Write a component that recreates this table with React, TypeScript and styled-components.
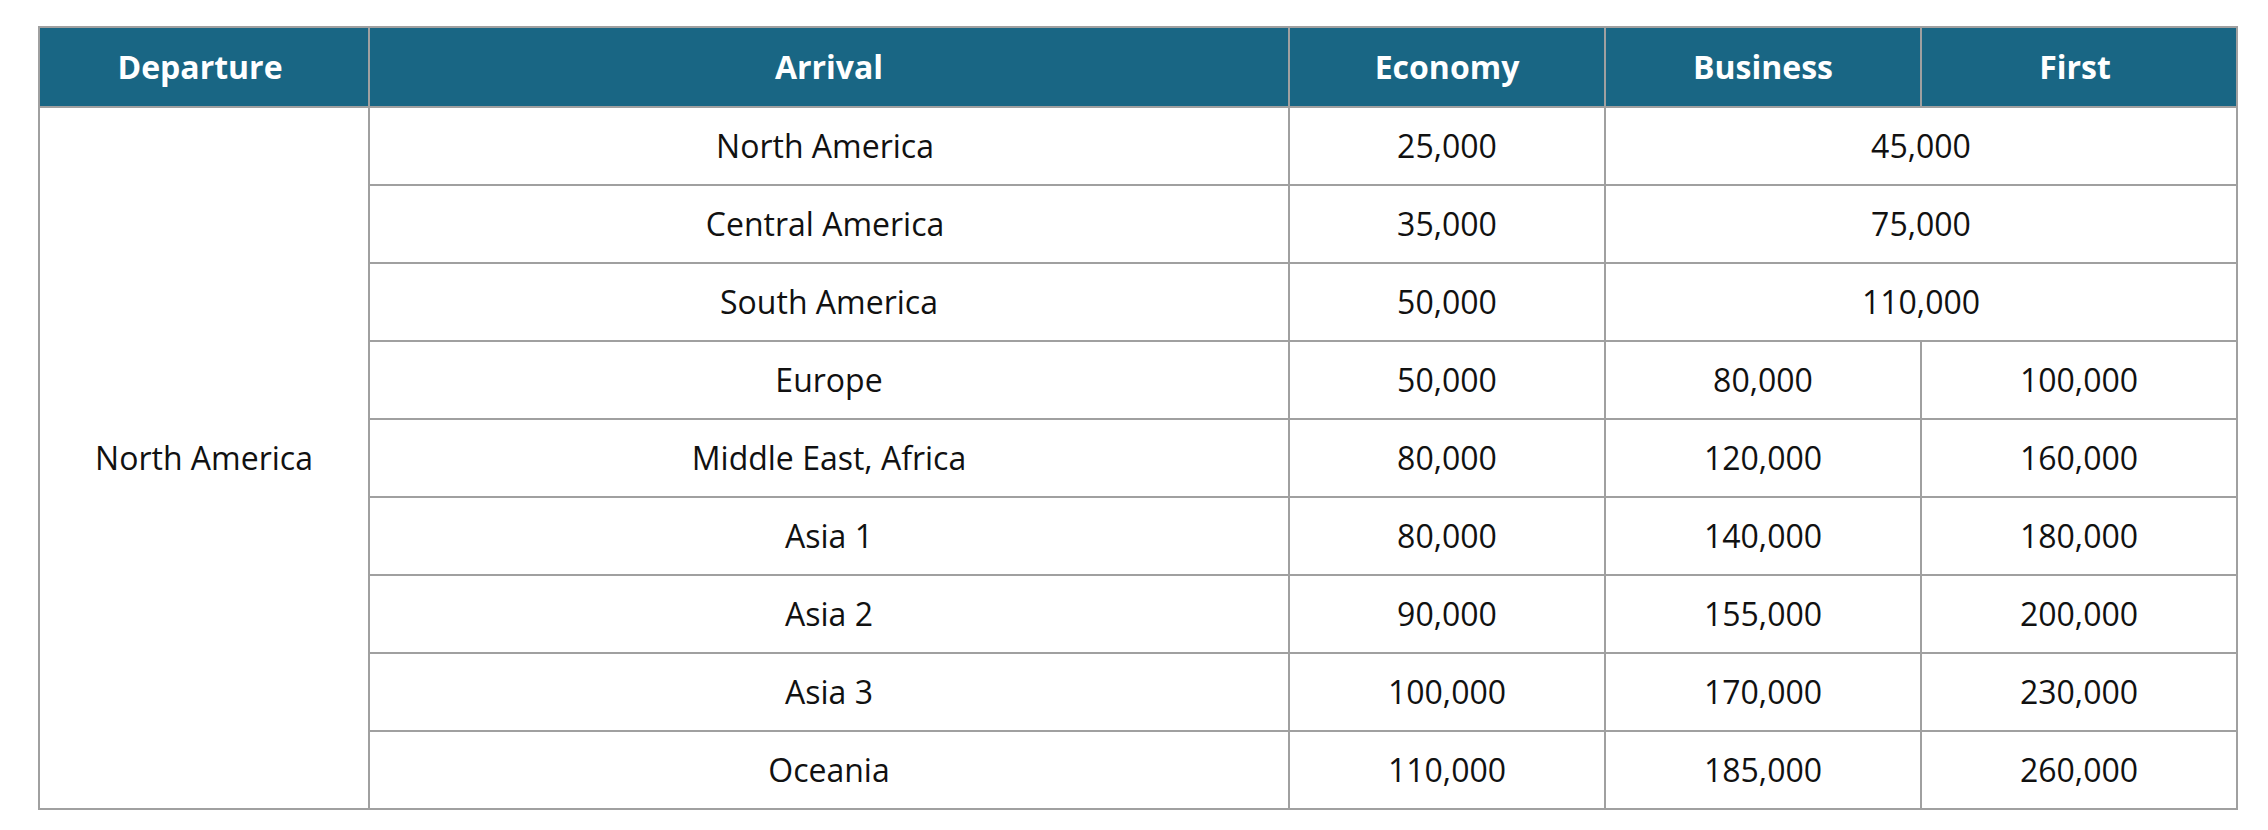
import React from "react";
import styled, { createGlobalStyle } from "styled-components";

const GlobalStyle = createGlobalStyle`
  html, body {
    margin: 0;
    padding: 0;
    background: #ffffff;
  }
  body {
    font-family: "Open Sans", "Noto Sans", Arial, sans-serif;
  }
`;

const Page = styled.div`
  padding: 26px 30px 0 38px;
`;

const Table = styled.table`
  width: 2200px;
  table-layout: fixed;
  border-collapse: separate;
  border-spacing: 0;
  border-top: 2px solid #a0a0a0;
  border-left: 2px solid #a0a0a0;
  font-family: "Open Sans", "Noto Sans", Arial, sans-serif;
  font-size: 32px;
  line-height: 1.35;
  color: #111111;
`;

const HeadCell = styled.th<{ $w: number; $shift?: boolean }>`
  box-sizing: border-box;
  width: ${(p) => p.$w}px;
  height: 80px;
  padding: 0 ${(p) => (p.$shift ? 8 : 0)}px 1px 0;
  background: #196684;
  color: #ffffff;
  font-weight: 700;
  text-align: center;
  vertical-align: middle;
  border-right: 2px solid #a0a0a0;
  border-bottom: 2px solid #a0a0a0;
`;

const Cell = styled.td<{ $shift?: boolean }>`
  box-sizing: border-box;
  height: 78px;
  padding: 0 ${(p) => (p.$shift ? 8 : 0)}px 0 0;
  font-weight: 400;
  text-align: center;
  vertical-align: middle;
  border-right: 2px solid #a0a0a0;
  border-bottom: 2px solid #a0a0a0;
`;

type Row = {
  arrival: string;
  economy: string;
  business: string;
  first?: string;
  shift?: boolean;
};

const rows: Row[] = [
  { arrival: "North America", economy: "25,000", business: "45,000", shift: true },
  { arrival: "Central America", economy: "35,000", business: "75,000", shift: true },
  { arrival: "South America", economy: "50,000", business: "110,000" },
  { arrival: "Europe", economy: "50,000", business: "80,000", first: "100,000" },
  { arrival: "Middle East, Africa", economy: "80,000", business: "120,000", first: "160,000" },
  { arrival: "Asia 1", economy: "80,000", business: "140,000", first: "180,000" },
  { arrival: "Asia 2", economy: "90,000", business: "155,000", first: "200,000" },
  { arrival: "Asia 3", economy: "100,000", business: "170,000", first: "230,000" },
  { arrival: "Oceania", economy: "110,000", business: "185,000", first: "260,000" },
];

export default function App() {
  return (
    <>
      <GlobalStyle />
      <Page>
        <Table>
          <thead>
            <tr>
              <HeadCell $w={330} $shift>
                Departure
              </HeadCell>
              <HeadCell $w={920}>Arrival</HeadCell>
              <HeadCell $w={316}>Economy</HeadCell>
              <HeadCell $w={316}>Business</HeadCell>
              <HeadCell $w={316} $shift>
                First
              </HeadCell>
            </tr>
          </thead>
          <tbody>
            {rows.map((r, i) => (
              <tr key={r.arrival}>
                {i === 0 && <Cell rowSpan={rows.length}>North America</Cell>}
                <Cell $shift={r.shift}>{r.arrival}</Cell>
                <Cell>{r.economy}</Cell>
                {r.first ? (
                  <>
                    <Cell>{r.business}</Cell>
                    <Cell>{r.first}</Cell>
                  </>
                ) : (
                  <Cell colSpan={2}>{r.business}</Cell>
                )}
              </tr>
            ))}
          </tbody>
        </Table>
      </Page>
    </>
  );
}
